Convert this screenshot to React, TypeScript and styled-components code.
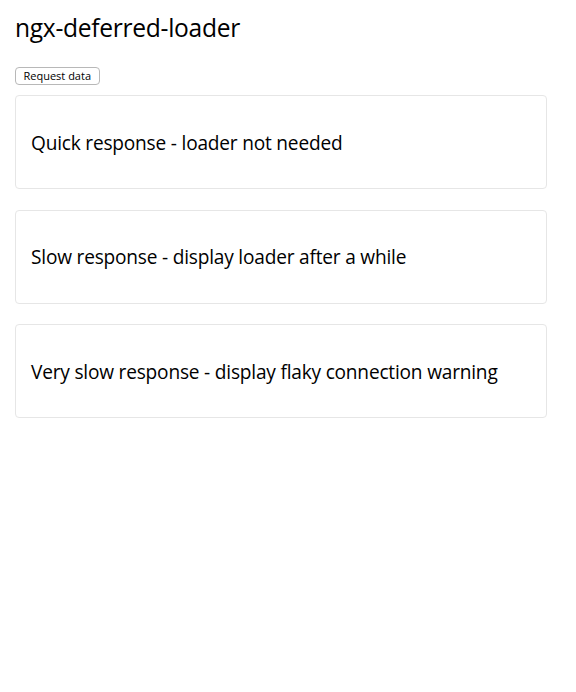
import React from "react";
import styled, { createGlobalStyle } from "styled-components";

const Global = createGlobalStyle`
  html, body { margin: 0; padding: 0; background: #fff; }
  body { font-family: "Open Sans", "Noto Sans", sans-serif; color: #000; }
`;

const Page = styled.div`
  padding: 10px 29px 10px 15px;
  display: flex;
  flex-direction: column;
`;

const Title = styled.h1`
  margin: 0;
  font-size: 24.6px;
  font-weight: 400;
  line-height: 36px;
  letter-spacing: -0.3px;
`;

const Button = styled.button`
  align-self: flex-start;
  margin-top: 21px;
  height: 18px;
  padding: 0 7.5px;
  font-family: "Open Sans", "Noto Sans", sans-serif;
  font-size: 11px;
  line-height: 16px;
  background: #fff;
  border: 1px solid #b8b8b8;
  border-radius: 4px;
  color: #000;
`;

const List = styled.div`
  margin-top: 10px;
  display: flex;
  flex-direction: column;
  gap: 20.5px;
`;

const Card = styled.div`
  height: 94px;
  box-sizing: border-box;
  border: 1px solid #e6e6e6;
  border-radius: 4px;
  padding: 1px 15px 0;
  display: flex;
  align-items: center;
`;

const CardText = styled.h2`
  margin: 0;
  font-size: 19.1px;
  font-weight: 400;
  letter-spacing: -0.2px;
`;

const items = [
  "Quick response - loader not needed",
  "Slow response - display loader after a while",
  "Very slow response - display flaky connection warning",
];

export default function App() {
  return (
    <>
      <Global />
      <Page>
        <Title>ngx-deferred-loader</Title>
        <Button>Request data</Button>
        <List>
          {items.map((t) => (
            <Card key={t}>
              <CardText>{t}</CardText>
            </Card>
          ))}
        </List>
      </Page>
    </>
  );
}
